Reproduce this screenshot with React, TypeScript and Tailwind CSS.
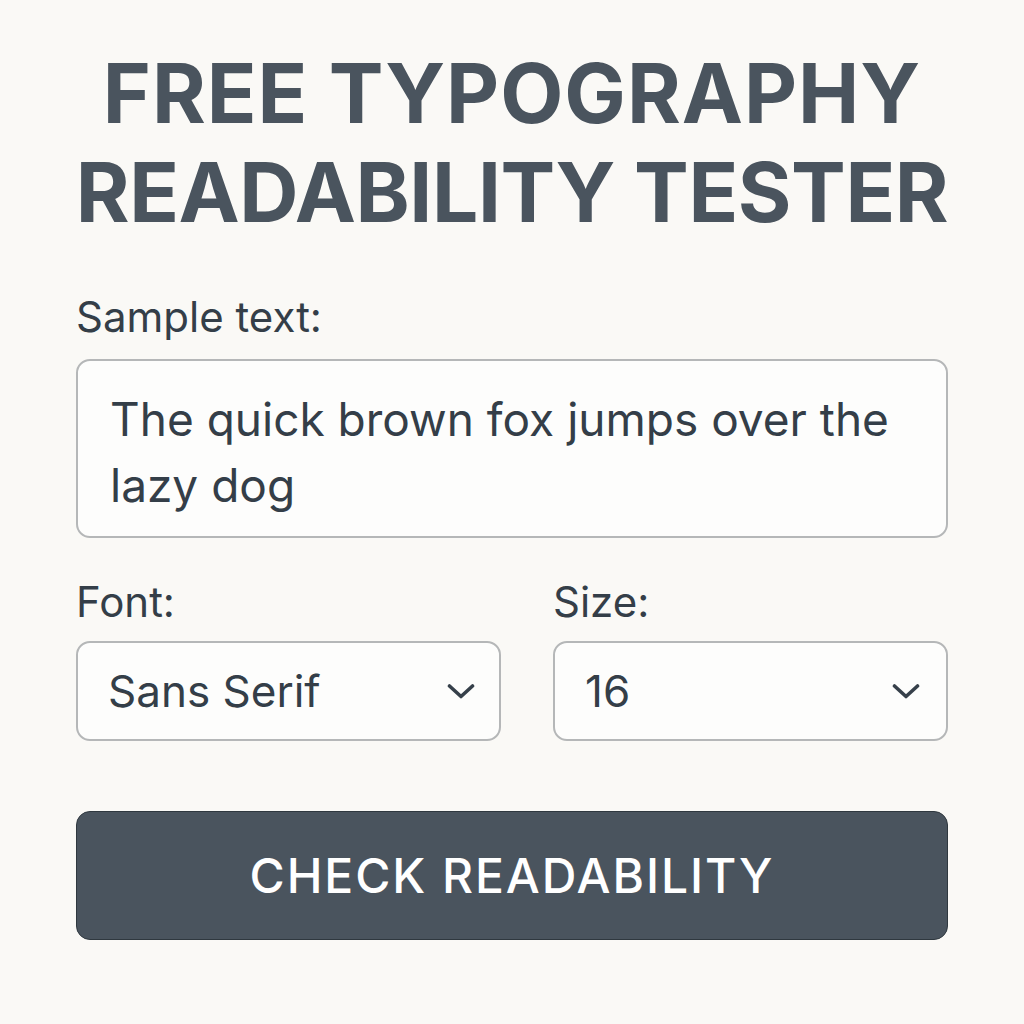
import React from 'react';

const Chevron: React.FC = () => (
  <svg width="28" height="17" viewBox="0 0 28 17" fill="none" className="shrink-0">
    <path d="M2.5 3 L14 13.5 L25.5 3" stroke="#36404a" strokeWidth="3.6" strokeLinecap="round" strokeLinejoin="round" />
  </svg>
);

const App: React.FC = () => {
  return (
    <div className="min-h-screen w-full bg-[#faf9f6] font-['Inter','Noto_Sans',sans-serif]">
      <div className="mx-auto w-[872px] pt-[44px]">
        <h1 className="whitespace-nowrap text-center text-[82px] leading-[99px] font-bold text-[#4a545e]">
          <span className="block tracking-[0.012em]">FREE TYPOGRAPHY</span>
          <span className="-mx-4 block tracking-[-0.005em]">READABILITY TESTER</span>
        </h1>

        <label className="mt-[52px] block text-[42px] leading-[46px] text-[#343e48]">Sample text:</label>
        <div className="mt-[19px] h-[179px] rounded-[14px] border-2 border-[#b5b7b8] bg-[#fdfdfc] pl-[32px] pr-[20px] pt-[25px]">
          <p className="text-[46px] leading-[66px] text-[#343e48]">
            The quick brown fox jumps over the lazy dog
          </p>
        </div>

        <div className="mt-[41px] flex gap-[52px]">
          <div className="w-[425px]">
            <label className="block text-[42px] leading-[46px] text-[#343e48]">Font:</label>
            <div className="mt-[16px] flex h-[100px] items-center justify-between rounded-[14px] border-2 border-[#b5b7b8] bg-[#fdfdfc] pl-[30px] pr-[24px]">
              <span className="text-[44px] text-[#343e48]">Sans Serif</span>
              <Chevron />
            </div>
          </div>
          <div className="flex-1">
            <label className="block text-[42px] leading-[46px] text-[#343e48]">Size:</label>
            <div className="mt-[16px] flex h-[100px] items-center justify-between rounded-[14px] border-2 border-[#b5b7b8] bg-[#fdfdfc] pl-[30px] pr-[26px]">
              <span className="text-[44px] text-[#343e48]">16</span>
              <Chevron />
            </div>
          </div>
        </div>

        <button className="mt-[70px] flex h-[129px] w-full items-center justify-center rounded-[14px] border border-[#2f383f] bg-[#4a545e] text-[48px] font-medium tracking-[0.04em] text-white">
          CHECK READABILITY
        </button>
      </div>
    </div>
  );
};

export default App;
